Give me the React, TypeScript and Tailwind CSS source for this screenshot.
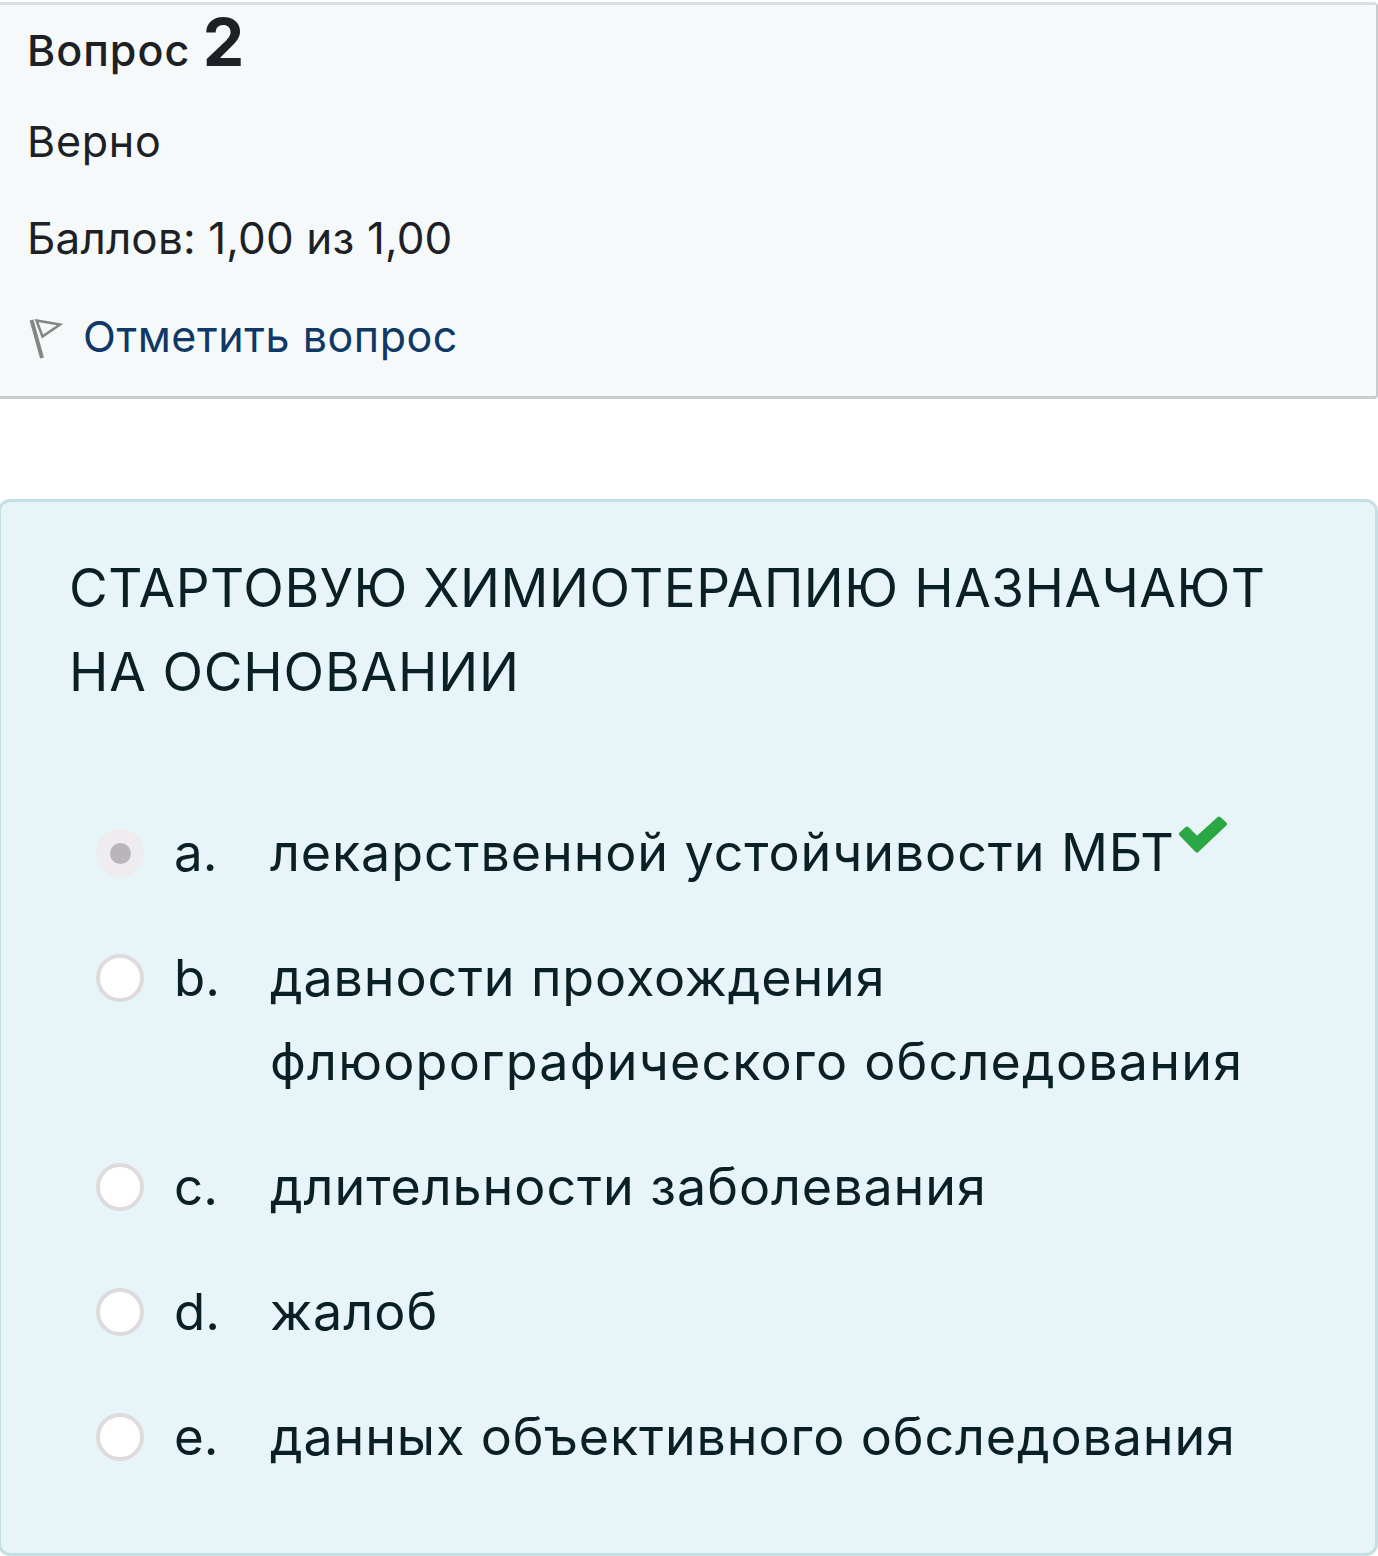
import React from 'react';

type Line = { text: string; tracking: string };
type Option = { letter: string; lines: Line[]; chosen?: boolean };

const options: Option[] = [
  { letter: 'a', chosen: true, lines: [{ text: 'лекарственной устойчивости МБТ', tracking: 'tracking-[0.9px]' }] },
  {
    letter: 'b',
    lines: [
      { text: 'давности прохождения', tracking: 'tracking-[0.85px]' },
      { text: 'флюорографического обследования', tracking: 'tracking-[1.2px]' },
    ],
  },
  { letter: 'c', lines: [{ text: 'длительности заболевания', tracking: 'tracking-[0.95px]' }] },
  { letter: 'd', lines: [{ text: 'жалоб', tracking: 'tracking-[1px]' }] },
  { letter: 'e', lines: [{ text: 'данных объективного обследования', tracking: 'tracking-[0.87px]' }] },
];

function FlagIcon() {
  return (
    <svg className="mt-[3px] mr-[20px] ml-px h-[44px] w-[35px] shrink-0" viewBox="0 0 35 44" fill="none" stroke="#858585">
      <path d="M3.5 4 L14 42" strokeWidth="4" />
      <path d="M8.5 4.5 L32 8.5 L14.5 20.5 Z" strokeWidth="2.5" />
    </svg>
  );
}

function Radio({ chosen }: { chosen?: boolean }) {
  if (chosen) {
    return (
      <span className="mt-[18px] mr-[30px] flex size-[48px] shrink-0 items-center justify-center rounded-full bg-[#eeecef]">
        <span className="size-[21px] rounded-full bg-[#b8b6b9]" />
      </span>
    );
  }
  return <span className="mt-[18px] mr-[30px] size-[48px] shrink-0 rounded-full border-4 border-[#dddbde] bg-white" />;
}

function Check() {
  return (
    <svg className="mt-[5px] h-[40px] w-[54px]" viewBox="0 0 54 40" fill="#2ba745" stroke="#2ba745" strokeWidth="4" strokeLinejoin="round">
      <path d="M6 18 L12 12.5 L22 22.5 L44 2.5 L50 8 L22 34.5 Z" />
    </svg>
  );
}

export default function App() {
  return (
    <div className="h-[1556px] w-[1378px] overflow-hidden bg-white font-['Inter',sans-serif] text-[#1d2125]">
      <section className="mt-[2px] h-[397px] rounded-r-[4px] border-y-[3px] border-r-2 border-t-[#dce0e3] border-r-[#c8cccf] border-b-[#c9cdce] bg-[#f5f9f9] pl-[27px] text-[43px] leading-[60px] whitespace-nowrap">
        <h3 className="h-[80px] pt-[7px] font-medium tracking-[1px]">
          Вопрос <span className="text-[66px] font-bold">2</span>
        </h3>
        <div className="mt-[26px] tracking-[0.75px]">Верно</div>
        <div className="mt-[37px] text-[44px] tracking-[0.15px]">Баллов: 1,00 из 1,00</div>
        <div className="mt-[38px] flex items-center text-[#0f3866]">
          <FlagIcon />
          <span className="tracking-[0.55px]">Отметить вопрос</span>
        </div>
      </section>
      <section className="mt-[100px] -ml-[2px] h-[1057px] w-[1380px] rounded-[12px] border-[3px] border-[#c5e0e4] bg-[#e7f4f8] pl-[68px] pt-[44px] text-[51px] leading-[84px] whitespace-nowrap text-[#0a2024]">
        <p className="text-[53px] tracking-[0.57px]">
          СТАРТОВУЮ ХИМИОТЕРАПИЮ НАЗНАЧАЮТ
          <br />
          <span className="tracking-[0.85px]">НА ОСНОВАНИИ</span>
        </p>
        <div className="mt-[97px] flex flex-col gap-[41px]">
          {options.map((o) => (
            <div key={o.letter} className="flex items-start pl-[27px]">
              <Radio chosen={o.chosen} />
              <span className="w-[96px]">{o.letter}.</span>
              <div className="text-[52px]">
                {o.lines.map((l) => (
                  <div key={l.text} className={l.tracking}>{l.text}</div>
                ))}
              </div>
              {o.chosen && <Check />}
            </div>
          ))}
        </div>
      </section>
    </div>
  );
}
